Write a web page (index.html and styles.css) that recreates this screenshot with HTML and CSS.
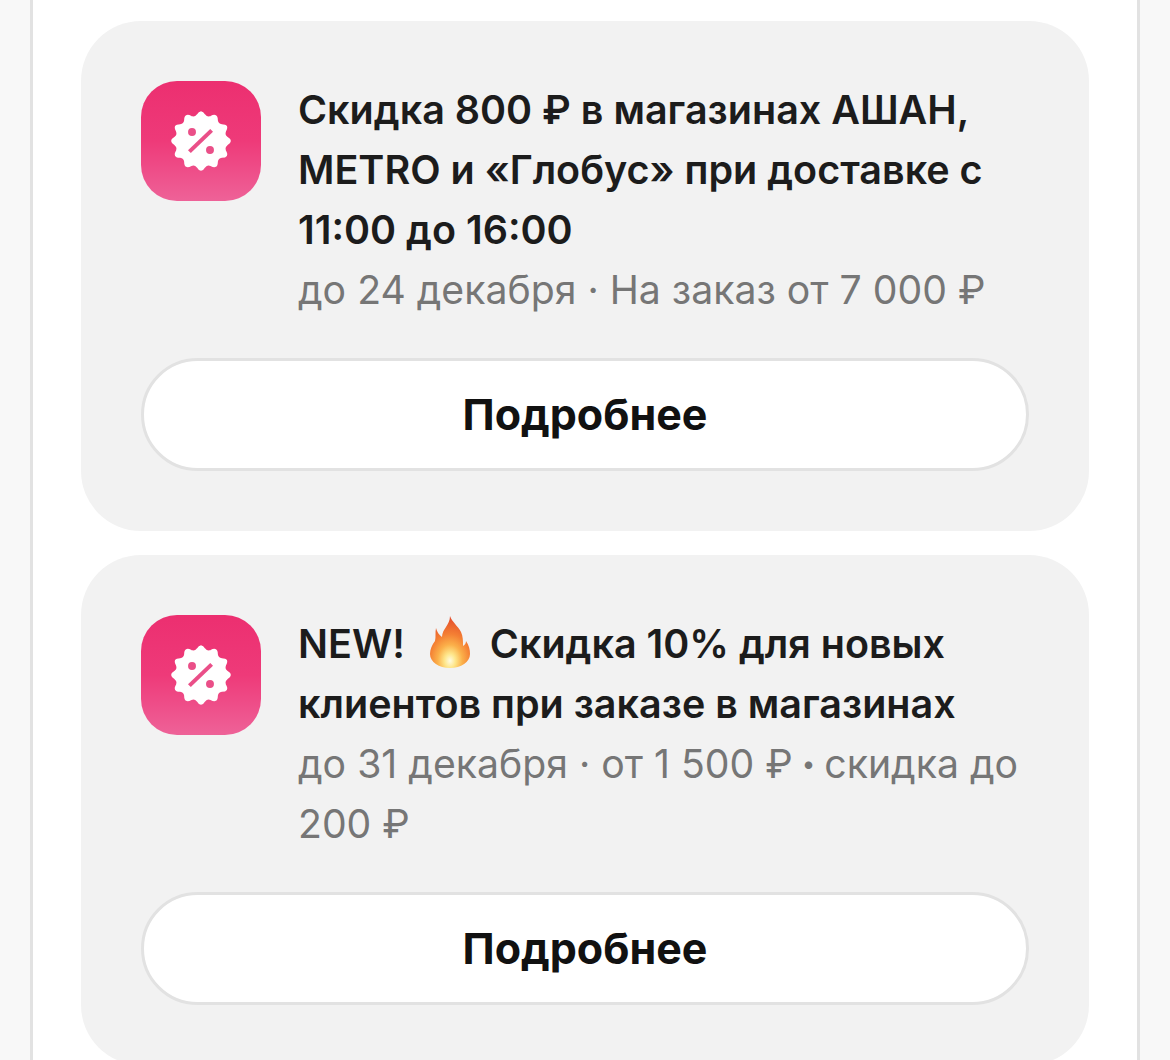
FILE: index.html
```html
<!DOCTYPE html>
<html lang="ru">
<head>
<meta charset="utf-8">
<title>Акции</title>
<link rel="stylesheet" href="styles.css">
</head>
<body>
<main class="sheet">
  <section class="card">
    <div class="offer">
      <div class="badge">
        <svg class="badge-icon" viewBox="0 0 60 60" aria-hidden="true"><path class="burst" d="M56.77 33.52Q53.18 36.21 54.94 40.33Q58.58 46.5 51.42 46.44Q46.97 46.97 46.44 51.42Q46.5 58.58 40.33 54.94Q36.21 53.18 33.52 56.77Q30 63 26.48 56.77Q23.79 53.18 19.67 54.94Q13.5 58.58 13.56 51.42Q13.03 46.97 8.58 46.44Q1.42 46.5 5.06 40.33Q6.82 36.21 3.23 33.52Q-3 30 3.23 26.48Q6.82 23.79 5.06 19.67Q1.42 13.5 8.58 13.56Q13.03 13.03 13.56 8.58Q13.5 1.42 19.67 5.06Q23.79 6.82 26.48 3.23Q30 -3 33.52 3.23Q36.21 6.82 40.33 5.06Q46.5 1.42 46.44 8.58Q46.97 13.03 51.42 13.56Q58.58 13.5 54.94 19.67Q53.18 23.79 56.77 26.48Q63 30 56.77 33.52Z"/><circle class="mark" cx="20.7" cy="20.7" r="4.1"/><circle class="mark" cx="39.3" cy="39.3" r="4.1"/><path class="slash" d="M18 41L41 19"/></svg>
      </div>
      <div class="copy">
        <h2 class="title">Скидка 800 ₽ в магазинах АШАН,<br>METRO и «Глобус» при доставке с<br>11:00 до 16:00</h2>
        <p class="meta">до 24 декабря · На заказ от 7 000 ₽</p>
      </div>
    </div>
    <button class="more" type="button">Подробнее</button>
  </section>
  <section class="card">
    <div class="offer">
      <div class="badge">
        <svg class="badge-icon" viewBox="0 0 60 60" aria-hidden="true"><path class="burst" d="M56.77 33.52Q53.18 36.21 54.94 40.33Q58.58 46.5 51.42 46.44Q46.97 46.97 46.44 51.42Q46.5 58.58 40.33 54.94Q36.21 53.18 33.52 56.77Q30 63 26.48 56.77Q23.79 53.18 19.67 54.94Q13.5 58.58 13.56 51.42Q13.03 46.97 8.58 46.44Q1.42 46.5 5.06 40.33Q6.82 36.21 3.23 33.52Q-3 30 3.23 26.48Q6.82 23.79 5.06 19.67Q1.42 13.5 8.58 13.56Q13.03 13.03 13.56 8.58Q13.5 1.42 19.67 5.06Q23.79 6.82 26.48 3.23Q30 -3 33.52 3.23Q36.21 6.82 40.33 5.06Q46.5 1.42 46.44 8.58Q46.97 13.03 51.42 13.56Q58.58 13.5 54.94 19.67Q53.18 23.79 56.77 26.48Q63 30 56.77 33.52Z"/><circle class="mark" cx="20.7" cy="20.7" r="4.1"/><circle class="mark" cx="39.3" cy="39.3" r="4.1"/><path class="slash" d="M18 41L41 19"/></svg>
      </div>
      <div class="copy">
        <h2 class="title">NEW! <svg class="flame" viewBox="0 0 40 52" aria-hidden="true"><defs><radialGradient id="fo" cx="0.5" cy="0.86" r="0.86"><stop offset="0" stop-color="#fffbe0"/><stop offset="0.16" stop-color="#fee68a"/><stop offset="0.36" stop-color="#fbb04a"/><stop offset="0.6" stop-color="#f47f33"/><stop offset="1" stop-color="#e2482a"/></radialGradient></defs><path fill="url(#fo)" d="M20 0C22 6 28 10 31 16C33 20 33 25 33 30C35 29 36 27 36 25C39 29 40 34 40 38C40 46 31 52 20 52C9 52 0 46 0 38C0 33 2 29 5 25C6 21 5 16 6 12C7 16 9 19 12 21C12 13 20 9 20 0Z"/></svg> Скидка 10% для новых<br>клиентов при заказе в магазинах</h2>
        <p class="meta">до 31 декабря · от 1 500 ₽ <span class="dot">•</span> скидка до<br>200 ₽</p>
      </div>
    </div>
    <button class="more" type="button">Подробнее</button>
  </section>
</main>
</body>
</html>
```
FILE: styles.css
```css
* { box-sizing: border-box; }
html, body { margin: 0; height: 1060px; overflow: hidden; }
body { background: #f8f8f8; font-family: "Inter", "Liberation Sans", sans-serif; }
.sheet {
  width: 1110px;
  height: 1060px;
  margin: 0 auto;
  padding: 21px 48px 0;
  background: #fff;
  border-left: 3px solid #e2e2e2;
  border-right: 3px solid #e2e2e2;
  display: flex;
  flex-direction: column;
  gap: 24px;
}
.card {
  flex: none;
  background: #f2f2f2;
  border-radius: 60px;
  padding: 60px;
  display: flex;
  flex-direction: column;
  gap: 38px;
}
.offer { display: flex; gap: 37px; align-items: flex-start; }
.badge {
  flex: none;
  width: 120px;
  height: 120px;
  border-radius: 36px;
  background: linear-gradient(180deg, #ec2f70 0%, #ee3a79 50%, #ee6298 100%);
  display: flex;
  align-items: center;
  justify-content: center;
}
.badge-icon { width: 58px; height: 58px; overflow: visible; }
.burst { fill: #fff; stroke: #fff; stroke-width: 2; stroke-linejoin: round; }
.mark { fill: #ea4f88; }
.slash { fill: none; stroke: #ea4f88; stroke-width: 4.2; }
.copy { flex: 1; min-width: 0; margin-top: -1px; }
.title { margin: 0; font-size: 39.5px; line-height: 60px; font-weight: 600; color: #1c1c1c; white-space: nowrap; }
.meta { margin: 0; font-size: 39.2px; line-height: 60px; font-weight: 400; color: #767676; white-space: nowrap; }
.dot { font-size: 24px; vertical-align: 6px; margin: 0 -2px; }
.flame { width: 40px; height: 52px; vertical-align: -10px; margin: 0 10px 0 15px; }
.more {
  display: block;
  width: 100%;
  height: 113px;
  background: #fff;
  border: 3px solid #e2e2e2;
  border-radius: 57px;
  font: 700 43px/1 "Inter", "Liberation Sans", sans-serif;
  color: #111;
}
```
